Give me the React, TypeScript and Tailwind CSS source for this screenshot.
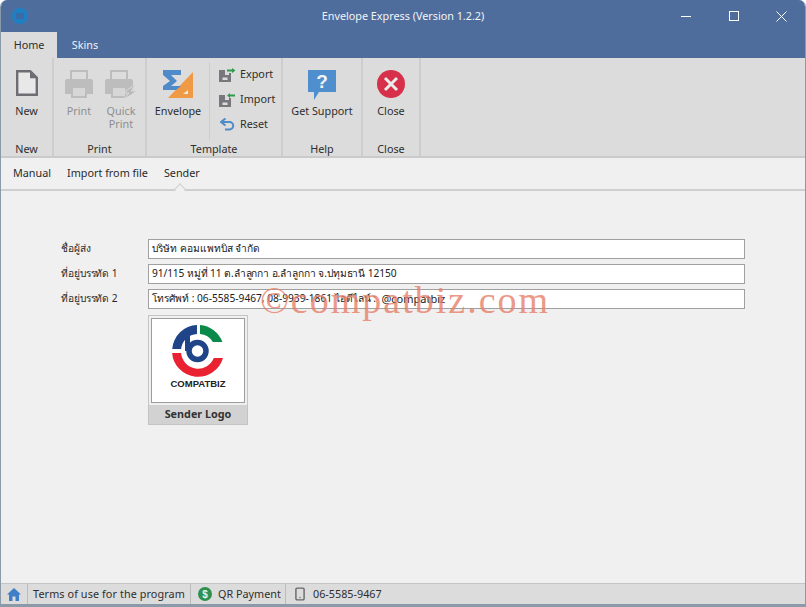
import { Smartphone } from 'lucide-react';
import type { ReactNode } from 'react';

const FONT = "font-['Noto_Sans','DejaVu_Sans',sans-serif]";

function Printer({ bolt }: { bolt?: boolean }) {
  return (
    <svg width={bolt ? 32 : 28} height={bolt ? 30 : 28} viewBox={bolt ? '0 0 32 30' : '0 0 28 28'}>
      <path d="M6 9V1h16v8" fill="none" stroke="#bdbdbd" strokeWidth="2" />
      <path d="M2 9h24a2 2 0 0 1 2 2v13H0V11a2 2 0 0 1 2-2z" fill="#bdbdbd" />
      <path d="M7 17h14v10H7z" fill="#d6d6d6" stroke="#bdbdbd" strokeWidth="2" />
      {bolt && <path d="M31 14l-13 9h6l-6 7 14-9h-6l5-7z" fill="#b8b8b8" stroke="#dcdcdc" strokeWidth="1" />}
    </svg>
  );
}

function NewIcon() {
  return (
    <svg width="22" height="26" viewBox="0 0 22 26">
      <path d="M1.200 1.200h13l6.600 6.600v17h-19.600z" fill="#e8e8e8" stroke="#6d6d73" strokeWidth="2.400" />
      <path d="M14 1.200v7h7z" fill="#6d6d73" />
    </svg>
  );
}

function EnvelopeIcon() {
  return (
    <svg width="31" height="28" viewBox="0 0 31 28">
      <path d="M30 2v26H5z" fill="#f09a45" />
      <path d="M25 20v4h-5z" fill="#e8e8e8" />
      <path d="M0 0h18v5H8l6 6-6 5h10v0l-5 4H0v-4l7-5-7-6z" fill="#4f8bc9" />
    </svg>
  );
}

function FloppyArrow({ flip }: { flip?: boolean }) {
  return (
    <svg width="17" height="14" viewBox="0 0 17 14">
      <path d="M0 2h6v5h4V5h2v9H0z" fill="#77777c" />
      <path d="M3.500 9.500h5v2.500h-5z" fill="#dcdcdc" />
      {flip ? (
        <path d="M16 1.500h-5V0L8 2.500 11 5V3.500h5z" fill="#2f9b4f" />
      ) : (
        <path d="M8 1.500h5V0l3.500 2.500L13 5V3.500H8z" fill="#2f9b4f" />
      )}
    </svg>
  );
}

function ResetIcon() {
  return (
    <svg width="15" height="13" viewBox="0 0 15 13">
      <path d="M2 4h7.500a3.600 3.600 0 0 1 0 7.500H5" fill="none" stroke="#4f8bc9" strokeWidth="2" />
      <path d="M5.500 0.500L1 4l4.500 3.500" fill="none" stroke="#4f8bc9" strokeWidth="2" />
    </svg>
  );
}

function SupportIcon() {
  return (
    <svg width="28" height="31" viewBox="0 0 28 31">
      <path d="M0 0h28v22H11l-5 8v-8H0z" fill="#4f8fce" />
      <text x="14" y="18" textAnchor="middle" fontSize="19" fontWeight="700" fill="#f2f2f2" fontFamily="Liberation Sans, sans-serif">?</text>
    </svg>
  );
}

function CloseIcon() {
  return (
    <svg width="28" height="28" viewBox="0 0 28 28">
      <circle cx="14" cy="14" r="14" fill="#d6304a" />
      <path d="M8 8l12 12M20 8L8 20" stroke="#ececec" strokeWidth="3" />
    </svg>
  );
}

function CompatLogo() {
  return (
    <svg width="52" height="54" viewBox="0 0 52 54">
      <path d="M28 1.100A26 26 0 0 1 50.400 18H40.800A17 17 0 0 0 28 10.100z" fill="#0a8a4a" />
      <path d="M.2 25A26 26 0 0 1 25 1v9A17 17 0 0 0 9.100 25z" fill="#1f4488" />
      <path d="M13 10l5-2v19h-5z" fill="#1f4488" />
      <circle cx="25.500" cy="27" r="8.500" fill="none" stroke="#1f4488" strokeWidth="5.500" />
      <path d="M.1 29h9A17 17 0 0 0 41.800 34H51A26 26 0 0 1 .1 29z" fill="#ea2130" />
    </svg>
  );
}

function Group({ label, width, children }: { label: string; width: string; children: ReactNode }) {
  return (
    <div className={`flex flex-col border-r-2 border-[#cdcdcd] ${width}`}>
      <div className="flex min-h-0 flex-1">{children}</div>
      <div className="h-[14px] text-center leading-[14px] text-[#2e2e2e]">{label}</div>
    </div>
  );
}

function BigButton({ icon, label, width, muted }: { icon: ReactNode; label: ReactNode; width: string; muted?: boolean }) {
  return (
    <div className={`flex flex-col items-center pt-[12px] ${width}`}>
      <div className="flex h-[34px] items-start justify-center">{icon}</div>
      <div className={`text-center leading-[13px] ${muted ? 'text-[#8e8e8e]' : 'text-[#2e2e2e]'}`}>{label}</div>
    </div>
  );
}

function SmallButton({ icon, label }: { icon: ReactNode; label: string }) {
  return (
    <div className="flex h-[25px] shrink-0 items-center">
      <div className="flex w-[23px] justify-center">{icon}</div>
      <span className="ml-px text-[#2e2e2e]">{label}</span>
    </div>
  );
}

function FormRow({ label, children, tight }: { label: string; children: ReactNode; tight?: boolean }) {
  return (
    <div className="flex items-center text-[10.2px]">
      <div className="w-[87px] tracking-[-0.1px] text-[#2a2a2a]">{label}</div>
      <div className={`flex h-[20px] w-[597px] items-center overflow-hidden whitespace-pre border border-[#a0a0a0] bg-white pl-[3px] text-[#202020] ${tight ? 'tracking-[-0.1px]' : ''}`}>
        {children}
      </div>
    </div>
  );
}

export default function App() {
  return (
    <div className={`${FONT} relative flex h-[607px] w-[806px] flex-col overflow-hidden rounded-t-[7px] border-x border-b-[3px] border-[#8b9aa8] bg-[#f0f0f0] text-[10.8px]`}>
      {/* title bar */}
      <div className="relative flex h-[32px] shrink-0 items-center justify-center bg-[#4f6d9c] text-white">
        <svg className="absolute left-[10px] top-[7px]" width="18" height="18" viewBox="0 0 18 18">
          <circle cx="9" cy="9" r="8" fill="#1f7fc4" />
          <rect x="5" y="6" width="8" height="6" rx="1.500" fill="#3c6aa5" />
        </svg>
        <span className="text-[#f2f4f8]">Envelope Express (Version 1.2.2)</span>
        <div className="absolute right-0 top-0 flex h-full items-center">
          <div className="flex w-[48px] justify-center"><div className="h-px w-[10px] bg-white" /></div>
          <div className="flex w-[48px] justify-center"><div className="size-[10px] border border-white" /></div>
          <div className="flex w-[47px] justify-center">
            <svg width="11" height="11" viewBox="0 0 11 11"><path d="M.5.5l10 10M10.500.5l-10 10" stroke="#fff" strokeWidth="1" /></svg>
          </div>
        </div>
      </div>

      {/* ribbon tabs */}
      <div className="flex h-[26px] shrink-0 bg-[#4f6d9c]">
        <div className="flex w-[56px] items-center justify-center bg-[#dcdcdc] text-[#2e2e2e]">Home</div>
        <div className="flex w-[56px] items-center justify-center text-[#eef1f6]">Skins</div>
      </div>

      {/* ribbon */}
      <div className="flex h-[100px] shrink-0 border-b-2 border-[#cacaca] bg-[#dcdcdc]">
        <Group label="New" width="w-[53px]">
          <BigButton icon={<NewIcon />} label="New" width="w-full" />
        </Group>
        <Group label="Print" width="w-[93px]">
          <BigButton icon={<Printer />} label="Print" width="w-[50px]" muted />
          <BigButton icon={<Printer bolt />} label={<>Quick<br />Print</>} width="w-[34px]" muted />
        </Group>
        <Group label="Template" width="w-[136px]">
          <BigButton icon={<EnvelopeIcon />} label="Envelope" width="w-[62px]" />
          <div className="mt-[4px] mb-[2px] flex flex-col border-l border-[#cdcdcd] pl-[6px]">
            <SmallButton icon={<FloppyArrow />} label="Export" />
            <SmallButton icon={<FloppyArrow flip />} label="Import" />
            <SmallButton icon={<ResetIcon />} label="Reset" />
          </div>
        </Group>
        <Group label="Help" width="w-[80px]">
          <BigButton icon={<SupportIcon />} label="Get Support" width="w-full" />
        </Group>
        <Group label="Close" width="w-[58px]">
          <BigButton icon={<CloseIcon />} label="Close" width="w-full" />
        </Group>
      </div>

      {/* sub tabs */}
      <div className="relative flex h-[33px] shrink-0 items-center gap-[16px] border-b-2 border-[#cfcfcf] pl-[12px] text-[#2a2a2a]">
        <span>Manual</span>
        <span>Import from file</span>
        <span>Sender</span>
        <div className="absolute left-[175px] top-[27px] size-[8px] rotate-45 border-l border-t border-[#cfcfcf] bg-[#f0f0f0]" />
      </div>

      {/* form */}
      <div className="flex flex-1 flex-col gap-[5px] pl-[60px] pt-[48px]">
        <FormRow label="ชื่อผู้ส่ง">บริษัท คอมแพทบิส จำกัด</FormRow>
        <FormRow label="ที่อยู่บรรทัด 1" tight>91/115 หมู่ที่ 11 ต.ลำลูกกา อ.ลำลูกกา จ.ปทุมธานี 12150</FormRow>
        <FormRow label="ที่อยู่บรรทัด 2">
          <span>โทรศัพท์ : 06-5585-9467, 08-9939-1861 ไอดีไลน์ :  </span>
          <span className="text-[11px]">@compatbiz</span>
        </FormRow>
        <div className="ml-[87px] mt-px flex h-[110px] w-[100px] flex-col border border-[#c4c4c4]">
          <div className="m-[2px] flex h-[85px] flex-col items-center border border-[#9c9c9c] bg-white pt-[5px]">
            <CompatLogo />
            <div className="font-['Liberation_Sans',sans-serif] text-[9.500px] font-bold leading-[11px] text-[#222]">COMPATBIZ</div>
          </div>
          <div className="flex flex-1 items-center justify-center bg-[#d2d2d2] font-bold text-[#333]">Sender Logo</div>
        </div>
      </div>

      {/* status bar */}
      <div className="flex h-[21px] shrink-0 items-center border-t border-[#c4c4c4] bg-[#dcdcdc] text-[#2e2e2e]">
        <div className="flex h-full w-[27px] items-center justify-center border-r border-[#bcbcbc]">
          <svg width="14" height="13" viewBox="0 0 14 13">
            <path d="M7 0L0 6.500h2V13h3.500V8.500h3V13H12V6.500h2z" fill="#3f7fc7" />
          </svg>
        </div>
        <div className="flex h-full w-[163px] items-center justify-center border-r border-[#bcbcbc] tracking-[0.1px]">Terms of use for the program</div>
        <div className="flex h-full w-[95px] items-center border-r border-[#bcbcbc] pl-[7px]">
          <svg width="14" height="14" viewBox="0 0 14 14">
            <circle cx="7" cy="7" r="7" fill="#2f8f4e" />
            <text x="7" y="10.500" textAnchor="middle" fontSize="10" fontWeight="700" fill="#e8f3ea" fontFamily="Liberation Sans, sans-serif">$</text>
          </svg>
          <span className="ml-[6px]">QR Payment</span>
        </div>
        <div className="flex h-full items-center pl-[7px]">
          <Smartphone size={14} color="#666" strokeWidth={2.400} />
          <span className="ml-[6px]">06-5585-9467</span>
        </div>
      </div>

      {/* watermark */}
      <div className="pointer-events-none absolute left-[259px] top-[278px] whitespace-nowrap font-['Liberation_Serif',serif] text-[38px] leading-[44px] tracking-[2px] text-[#e8806a] opacity-80">
        ©compatbiz.com
      </div>
    </div>
  );
}
